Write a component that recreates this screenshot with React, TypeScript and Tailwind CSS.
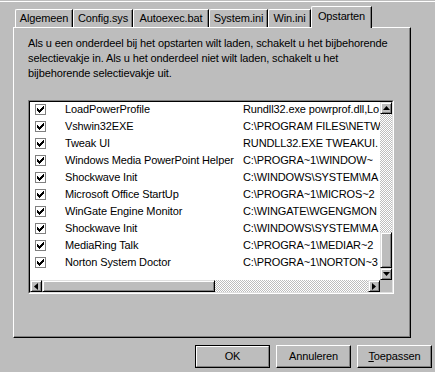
import React from "react";

const rows: [string, string][] = [
  ["LoadPowerProfile", "Rundll32.exe powrprof.dll,Lo"],
  ["Vshwin32EXE", "C:\\PROGRAM FILES\\NETW"],
  ["Tweak UI", "RUNDLL32.EXE TWEAKUI."],
  ["Windows Media PowerPoint Helper", "C:\\PROGRA~1\\WINDOW~"],
  ["Shockwave Init", "C:\\WINDOWS\\SYSTEM\\MA"],
  ["Microsoft Office StartUp", "C:\\PROGRA~1\\MICROS~2"],
  ["WinGate Engine Monitor", "C:\\WINGATE\\WGENGMON"],
  ["Shockwave Init", "C:\\WINDOWS\\SYSTEM\\MA"],
  ["MediaRing Talk", "C:\\PROGRA~1\\MEDIAR~2"],
  ["Norton System Doctor", "C:\\PROGRA~1\\NORTON~3"],
];

const tabs = [
  { label: "Algemeen", w: "w-[58px]" },
  { label: "Config.sys", w: "w-[60px]" },
  { label: "Autoexec.bat", w: "w-[76px]" },
  { label: "System.ini", w: "w-[59px]" },
  { label: "Win.ini", w: "w-[43px]" },
];

function Check() {
  return (
    <div className="w-[11px] h-[11px] border border-[#808080] bg-white flex items-center justify-center shrink-0">
      <svg width="7" height="7" viewBox="0 0 7 7" shapeRendering="crispEdges">
        <rect x="0" y="2" width="1" height="3" fill="#000" />
        <rect x="1" y="3" width="1" height="3" fill="#000" />
        <rect x="2" y="4" width="1" height="3" fill="#000" />
        <rect x="3" y="3" width="1" height="3" fill="#000" />
        <rect x="4" y="2" width="1" height="3" fill="#000" />
        <rect x="5" y="1" width="1" height="3" fill="#000" />
        <rect x="6" y="0" width="1" height="3" fill="#000" />
      </svg>
    </div>
  );
}

const raised =
  "border border-black border-t-[#dfdfdf] border-l-[#dfdfdf] shadow-[inset_1px_1px_0_#ffffff,inset_-1px_-1px_0_#808080] bg-[#bdbdbd]";

const dither =
  "bg-[repeating-conic-gradient(#bdbdbd_0%_25%,#ffffff_0%_50%)] bg-[length:2px_2px]";

function Arrow({ dir }: { dir: "up" | "down" | "left" | "right" }) {
  const pts: Record<string, string> = {
    up: "3.5,0 7,4 0,4",
    down: "0,0 7,0 3.5,4",
    left: "4,0 4,7 0,3.5",
    right: "0,0 4,3.5 0,7",
  };
  const vertical = dir === "up" || dir === "down";
  return (
    <svg
      width={vertical ? 7 : 4}
      height={vertical ? 4 : 7}
      viewBox={vertical ? "0 0 7 4" : "0 0 4 7"}
    >
      <polygon points={pts[dir]} fill="#000" />
    </svg>
  );
}

function ScrollBtn({ dir }: { dir: "up" | "down" | "left" | "right" }) {
  return (
    <div className={`w-[12px] h-[12px] shrink-0 flex items-center justify-center ${raised}`}>
      <Arrow dir={dir} />
    </div>
  );
}

export default function App() {
  return (
    <div className="w-[435px] h-[372px] bg-[#bdbdbd] overflow-hidden font-['Liberation_Sans',Arial,sans-serif] text-[11px] tracking-[-0.12px] text-black">
      <div className="h-px" />
      <div className="h-px bg-white" />
      {/* tabs */}
      <div className="mt-[4px] h-[21px] pl-[15px] flex items-end">
        {tabs.map((t) => (
          <div
            key={t.label}
            className={`${t.w} h-[18px] flex items-center justify-center border-t border-l border-r border-t-white border-l-white border-r-black rounded-tl-[2px] shadow-[inset_-1px_0_0_#808080] leading-none`}
          >
            {t.label}
          </div>
        ))}
        <div className="relative z-10 w-[61px] h-[22px] -mb-[1px] bg-[#bdbdbd] flex justify-center pt-[4px] border-t border-l border-r border-t-white border-l-white border-r-black rounded-tl-[2px] shadow-[inset_-1px_0_0_#808080] leading-none">
          Opstarten
        </div>
      </div>
      {/* panel */}
      <div className="ml-[13px] w-[398px] h-[311px] border border-t-white border-l-white border-r-black border-b-black shadow-[inset_-1px_-1px_0_#808080] pl-[14px] pt-[8px]">
        <p className="leading-[15px] w-[370px]">
          Als u een onderdeel bij het opstarten wilt laden, schakelt u het bijbehorende
          <br />
          selectievakje in. Als u het onderdeel niet wilt laden, schakelt u het
          <br />
          bijbehorende selectievakje uit.
        </p>
        {/* list box */}
        <div className="mt-[19px] w-[366px] h-[194px] border border-t-[#808080] border-l-[#808080] border-r-white border-b-white">
          <div className="w-full h-full border border-t-black border-l-black border-r-[#dfdfdf] border-b-[#dfdfdf] bg-white flex flex-col">
            <div className="flex flex-1 min-h-0">
              <div className="flex-1 overflow-hidden">
                <div className="-mt-[1px]">
                  {rows.map(([name, cmd], i) => (
                    <div key={i} className="h-[17px] flex items-center pl-[5px] whitespace-nowrap">
                      <Check />
                      <div className="ml-[19px] w-[178px] shrink-0">{name}</div>
                      <div>{cmd}</div>
                    </div>
                  ))}
                </div>
              </div>
              <div className="w-[12px] flex flex-col">
                <ScrollBtn dir="up" />
                <div className={`flex-1 ${dither}`} />
                <div className={`h-[36px] shrink-0 ${raised}`} />
                <ScrollBtn dir="down" />
              </div>
            </div>
            <div className="h-[12px] flex shrink-0">
              <ScrollBtn dir="left" />
              <div className={`w-[173px] shrink-0 ${raised}`} />
              <div className={`flex-1 ${dither}`} />
              <ScrollBtn dir="right" />
              <div className="w-[12px] bg-[#bdbdbd]" />
            </div>
          </div>
        </div>
      </div>
      {/* buttons */}
      <div className="mt-[7px] pr-[3px] flex justify-end gap-[6px]">
        <div className="w-[75px] h-[23px] border border-black">
          <div className="w-full h-full border border-t-white border-l-white border-r-[#808080] border-b-[#808080] flex items-center justify-center">
            OK
          </div>
        </div>
        <div className="w-[75px] h-[23px] flex items-center justify-center border border-t-white border-l-white border-r-black border-b-black shadow-[inset_-1px_-1px_0_#808080]">
          Annuleren
        </div>
        <div className="w-[75px] h-[23px] flex items-center justify-center border border-t-white border-l-white border-r-black border-b-black shadow-[inset_-1px_-1px_0_#808080]">
          <span>
            <span className="underline">T</span>oepassen
          </span>
        </div>
      </div>
    </div>
  );
}
